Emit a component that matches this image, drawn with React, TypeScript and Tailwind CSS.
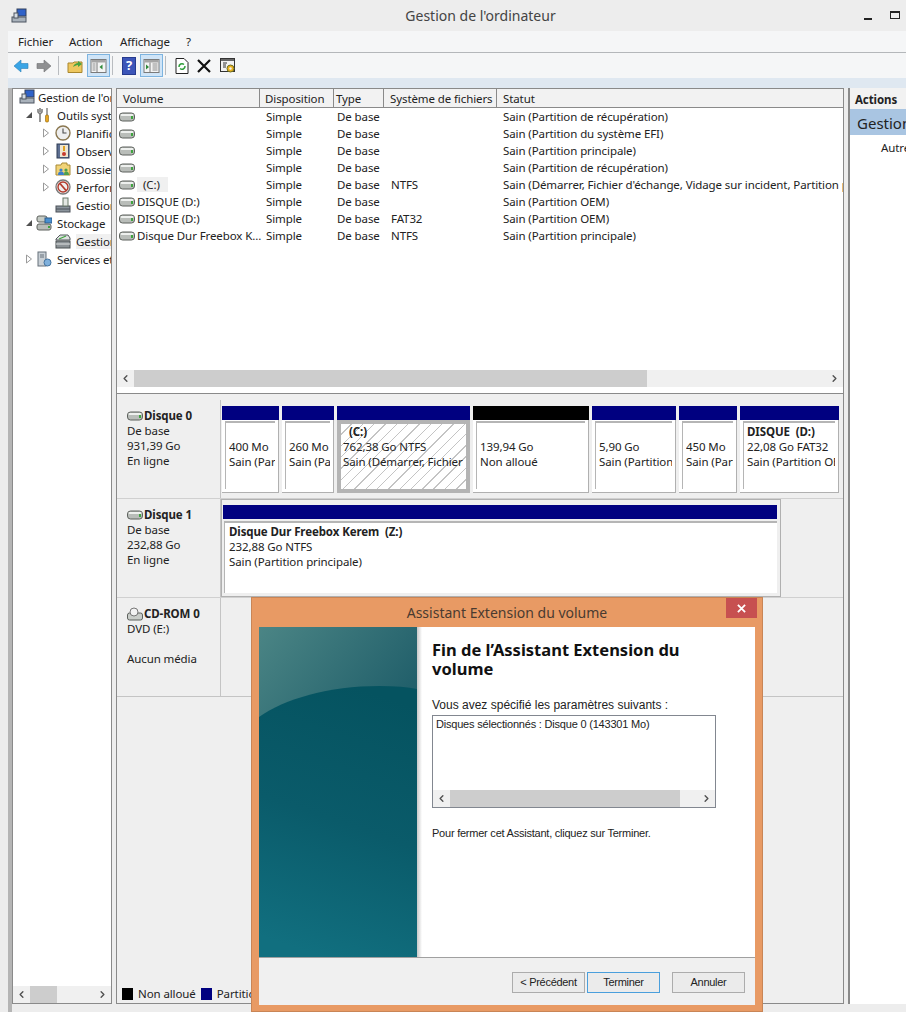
import { ChevronLeft, ChevronRight } from "lucide-react";

const treeRows = [
  { pad: 6, arrow: "", icon: "computer", label: "Gestion de l'ordinateur", bg: "" },
  { pad: 12, arrow: "open", icon: "tools", label: "Outils système", bg: "" },
  { pad: 29, arrow: "closed", icon: "clock", label: "Planificateur", bg: "" },
  { pad: 29, arrow: "closed", icon: "log", label: "Observateur", bg: "" },
  { pad: 29, arrow: "closed", icon: "folder", label: "Dossiers", bg: "" },
  { pad: 29, arrow: "closed", icon: "perf", label: "Performances", bg: "" },
  { pad: 31, arrow: "", icon: "device", label: "Gestionnaire", bg: "" },
  { pad: 12, arrow: "open", icon: "storage", label: "Stockage", bg: "" },
  { pad: 31, arrow: "", icon: "disk", label: "Gestion", bg: "bg-[#f0f0f0]" },
  { pad: 12, arrow: "closed", icon: "services", label: "Services et", bg: "" },
];

const volumes = [
  { name: "", layout: "Simple", type: "De base", fs: "", status: "Sain (Partition de récupération)" },
  { name: "", layout: "Simple", type: "De base", fs: "", status: "Sain (Partition du système EFI)" },
  { name: "", layout: "Simple", type: "De base", fs: "", status: "Sain (Partition principale)" },
  { name: "", layout: "Simple", type: "De base", fs: "", status: "Sain (Partition de récupération)" },
  { name: "(C:)", layout: "Simple", type: "De base", fs: "NTFS", status: "Sain (Démarrer, Fichier d'échange, Vidage sur incident, Partition principale)" },
  { name: "DISQUE (D:)", layout: "Simple", type: "De base", fs: "", status: "Sain (Partition OEM)" },
  { name: "DISQUE (D:)", layout: "Simple", type: "De base", fs: "FAT32", status: "Sain (Partition OEM)" },
  { name: "Disque Dur Freebox K...", layout: "Simple", type: "De base", fs: "NTFS", status: "Sain (Partition principale)" },
];

const partitions = [
  { width: "w-[57px]", bar: "bg-[#000080]", title: "", size: "400 Mo", state: "Sain (Partition de récupération)" },
  { width: "w-[52px]", bar: "bg-[#000080]", title: "", size: "260 Mo", state: "Sain (Partition EFI)" },
  { width: "w-[133px]", bar: "bg-[#000080]", title: "(C:)", size: "762,38 Go NTFS", state: "Sain (Démarrer, Fichier d'échange)", selected: true },
  { width: "w-[116px]", bar: "bg-black", title: "", size: "139,94 Go", state: "Non alloué" },
  { width: "w-[84px]", bar: "bg-[#000080]", title: "", size: "5,90 Go", state: "Sain (Partition principale)" },
  { width: "w-[58px]", bar: "bg-[#000080]", title: "", size: "450 Mo", state: "Sain (Partition)" },
  { width: "w-[99px]", bar: "bg-[#000080]", title: "DISQUE  (D:)", size: "22,08 Go FAT32", state: "Sain (Partition OEM)" },
];

function DriveIcon({ className = "w-[16px] h-[10px] shrink-0" }: { className?: string }) {
  return (
    <svg viewBox="0 0 16 10" className={className}>
      <rect x="0.5" y="1" width="15" height="8" rx="3" fill="#b9bdb9" stroke="#5d615d" />
      <rect x="1.500" y="2" width="13" height="2" rx="1" fill="#eef0ee" />
      <rect x="12" y="4" width="2" height="3" fill="#3fa33f" />
    </svg>
  );
}

function TreeIcon({ kind }: { kind: string }) {
  if (kind === "computer")
    return (
      <svg viewBox="0 0 16 16" className="h-4 w-4 shrink-0">
        <rect x="6" y="1" width="9" height="7" fill="#2f62c9" stroke="#33415c" />
        <rect x="1" y="9" width="14" height="5" fill="#a9b2bb" stroke="#4c5560" />
        <rect x="3" y="5" width="4" height="5" fill="#d6dde4" stroke="#4c5560" />
      </svg>
    );
  if (kind === "tools")
    return (
      <svg viewBox="0 0 16 16" className="h-4 w-4 shrink-0">
        <path d="M4 1v4M2 2v3l2 2 2-2V2M4 7v8" fill="none" stroke="#7d7d7d" strokeWidth="1.6" />
        <path d="M11 1v7" stroke="#8c8c8c" strokeWidth="1.6" />
        <rect x="9.500" y="8" width="3" height="7" rx="1" fill="#e9a71f" stroke="#8a5f0a" strokeWidth="0.6" />
      </svg>
    );
  if (kind === "clock")
    return (
      <svg viewBox="0 0 16 16" className="h-4 w-4 shrink-0">
        <circle cx="8" cy="8" r="7" fill="#eeeeee" stroke="#8a7750" strokeWidth="1.4" />
        <path d="M8 3.500V8h3.500" fill="none" stroke="#4b4b4b" strokeWidth="1.1" />
      </svg>
    );
  if (kind === "log")
    return (
      <svg viewBox="0 0 16 16" className="h-4 w-4 shrink-0">
        <rect x="2" y="1" width="12" height="14" fill="#5d6f92" stroke="#2f3c55" />
        <rect x="5" y="2" width="8" height="12" fill="#efe6cf" />
        <path d="M9 3v5" stroke="#e0a020" strokeWidth="2" />
        <circle cx="9" cy="11" r="2" fill="#c63a2e" />
      </svg>
    );
  if (kind === "folder")
    return (
      <svg viewBox="0 0 16 16" className="h-4 w-4 shrink-0">
        <path d="M1 4h5l1-2h5v2h3v10H1z" fill="#f1d377" stroke="#a98a35" />
        <circle cx="6" cy="9" r="1.6" fill="#3c7ecb" />
        <path d="M3 14c0-3 1-3.500 3-3.500s3 .5 3 3.500z" fill="#3c7ecb" />
        <circle cx="11" cy="9" r="1.6" fill="#4fa04f" />
        <path d="M9 14c0-3 .5-3.500 2-3.500s3 .5 3 3.500z" fill="#4fa04f" />
      </svg>
    );
  if (kind === "perf")
    return (
      <svg viewBox="0 0 16 16" className="h-4 w-4 shrink-0">
        <circle cx="8" cy="8" r="7" fill="#efefef" stroke="#777777" strokeWidth="1.3" />
        <circle cx="8" cy="8" r="5" fill="none" stroke="#b33a2b" strokeWidth="1.4" />
        <path d="M5 4.500l6 7" stroke="#b33a2b" strokeWidth="1.8" />
      </svg>
    );
  if (kind === "device")
    return (
      <svg viewBox="0 0 16 16" className="h-4 w-4 shrink-0">
        <rect x="1" y="9" width="14" height="6" fill="#8b949c" stroke="#4b5158" />
        <path d="M1 12h14" stroke="#4b5158" />
        <rect x="8" y="1" width="5" height="8" fill="#e3e7e3" stroke="#6a7a6a" />
      </svg>
    );
  if (kind === "storage")
    return (
      <svg viewBox="0 0 16 16" className="h-4 w-4 shrink-0">
        <rect x="1" y="1" width="10" height="6" rx="2" fill="#c4cac4" stroke="#5d615d" />
        <rect x="9" y="3" width="7" height="5" fill="#4a90d0" stroke="#2c5c8c" />
        <rect x="1" y="9" width="14" height="6" rx="2" fill="#b9bdb9" stroke="#5d615d" />
        <rect x="12" y="11" width="2" height="2" fill="#3fa33f" />
      </svg>
    );
  if (kind === "disk")
    return (
      <svg viewBox="0 0 16 16" className="h-4 w-4 shrink-0">
        <path d="M1 6l4-4h8l2 3v2H1z" fill="#dfe2e2" stroke="#53595c" />
        <path d="M4 6l7-3" stroke="#3fa33f" strokeWidth="1.2" />
        <rect x="1" y="8" width="14" height="7" fill="#8c9296" stroke="#4b5053" />
        <path d="M1 11h14" stroke="#dfe2e2" />
      </svg>
    );
  return (
    <svg viewBox="0 0 16 16" className="h-4 w-4 shrink-0">
      <rect x="2" y="1" width="8" height="14" fill="#c9d0d6" stroke="#67717a" />
      <path d="M4 4h4M4 6h4" stroke="#67717a" />
      <circle cx="11.500" cy="11.500" r="3.500" fill="#7fb0dc" stroke="#44739f" />
    </svg>
  );
}

function TreeArrow({ kind }: { kind: string }) {
  if (kind === "open")
    return (
      <svg viewBox="0 0 8 8" className="h-2 w-2 shrink-0">
        <path d="M7 1v6H1z" fill="#505050" />
      </svg>
    );
  if (kind === "closed")
    return (
      <svg viewBox="0 0 8 10" className="h-2.5 w-2 shrink-0">
        <path d="M1.500 1l5 4-5 4z" fill="#ffffff" stroke="#9a9a9a" />
      </svg>
    );
  return <span className="w-2 shrink-0" />;
}

function HScroll({ thumb, grow }: { thumb: string; grow: string }) {
  return (
    <div className="flex h-[17px] shrink-0 items-center bg-[#f0f0f0]">
      <div className="flex w-[17px] shrink-0 justify-center">
        <ChevronLeft size={11} strokeWidth={3} className="text-[#505050]" />
      </div>
      <div className={`h-full bg-[#cdcdcd] ${thumb}`} />
      <div className={grow} />
      <div className="flex w-[17px] shrink-0 justify-center">
        <ChevronRight size={11} strokeWidth={3} className="text-[#505050]" />
      </div>
    </div>
  );
}

function ToolButton({ children }: { children: React.ReactNode }) {
  return (
    <div className="flex h-[23px] w-[23px] items-center justify-center border border-[#7db4e0] bg-[#cfe4f7]">
      {children}
    </div>
  );
}

function PaneIcon({ side }: { side: "left" | "right" }) {
  return (
    <svg viewBox="0 0 16 14" className="h-[14px] w-[17px]">
      <rect x="0.5" y="0.5" width="15" height="13" fill="#f4f4f4" stroke="#7a7a7a" />
      <rect x="1" y="1" width="14" height="2.500" fill="#a5a5a5" />
      <path d="M6.500 3.500v10" stroke="#7a7a7a" />
      <path d={side === "left" ? "M2 5h3M2 7h3M2 9h3M2 11h3" : "M9 5h5M9 7h5M9 9h5M9 11h5"} stroke="#8d8d8d" />
      <path d={side === "left" ? "M12 5.500v5l-3-2.500z" : "M2.500 5.500v5l3-2.500z"} fill="#2f8a3a" />
    </svg>
  );
}

function Toolbar() {
  return (
    <div className="flex h-[25px] shrink-0 items-center bg-[#f5f6f7] pl-[5px]">
      <svg viewBox="0 0 16 14" className="h-[14px] w-[16px]">
        <path d="M8 1L1 7l7 6V9.500h7v-5H8z" fill="#3aa5e6" stroke="#2a7fb8" strokeWidth="0.6" />
      </svg>
      <svg viewBox="0 0 16 14" className="ml-[7px] h-[14px] w-[16px]">
        <path d="M8 1l7 6-7 6V9.500H1v-5h7z" fill="#8f9092" stroke="#6f7072" strokeWidth="0.6" />
      </svg>
      <div className="ml-[6px] h-[19px] w-px bg-[#b9bcc0]" />
      <svg viewBox="0 0 16 16" className="ml-[8px] h-4 w-4">
        <path d="M1 5h5l1-1h8v10.500H1z" fill="#eec75f" stroke="#a9872e" />
        <path d="M6 9c1-3 3-4 5-4V3l4 3-4 3V7c-2 0-3 1-5 2z" fill="#49a341" />
      </svg>
      <div className="ml-[4px]">
        <ToolButton>
          <PaneIcon side="left" />
        </ToolButton>
      </div>
      <div className="ml-[2px] h-[19px] w-px bg-[#b9bcc0]" />
      <div className="ml-[9px] flex h-[18px] w-[14px] items-center justify-center border border-[#263a8e] bg-[#3c55b8] text-[13px] font-bold leading-none text-white">
        ?
      </div>
      <div className="ml-[4px]">
        <ToolButton>
          <PaneIcon side="right" />
        </ToolButton>
      </div>
      <div className="ml-[2px] h-[19px] w-px bg-[#b9bcc0]" />
      <svg viewBox="0 0 14 16" className="ml-[9px] h-4 w-[14px]">
        <path d="M1 .500h8l4 4v11H1z" fill="#ffffff" stroke="#222222" />
        <path d="M4 9a3 3 0 0 1 5-2.500M10 8a3 3 0 0 1-5 2.500" fill="none" stroke="#2e9e3a" strokeWidth="1.500" />
      </svg>
      <svg viewBox="0 0 16 16" className="ml-[7px] h-4 w-4">
        <path d="M2 2l12 12M14 2L2 14" stroke="#111111" strokeWidth="2.200" />
      </svg>
      <svg viewBox="0 0 16 16" className="ml-[8px] h-4 w-4">
        <rect x="0.5" y="0.5" width="14" height="13" fill="#f2f2f2" stroke="#333333" />
        <rect x="1" y="1" width="13" height="2" fill="#666666" />
        <path d="M3 5h4M3 7h3M3 9h3" stroke="#333333" />
        <circle cx="10.500" cy="10.500" r="3.500" fill="#e9b21f" stroke="#6e6e1e" />
        <circle cx="10.500" cy="10.500" r="1.200" fill="#f2f2f2" />
      </svg>
    </div>
  );
}

function Partition({ p }: { p: (typeof partitions)[number] }) {
  const lines = (
    <div className="overflow-hidden whitespace-pre">
      <div className={`h-[15px] font-bold ${p.selected ? "pl-[6px]" : ""}`}>{p.title}</div>
      <div>{p.size}</div>
      <div>{p.state}</div>
    </div>
  );
  return (
    <div className={`flex flex-col ${p.width}`}>
      <div className={`h-[14px] ${p.bar}`} />
      {p.selected ? (
        <div className="h-[73px] border-[4px] border-[#b4b4b4] bg-[repeating-linear-gradient(135deg,#ffffff,#ffffff_7px,#c4c4c4_7px,#c4c4c4_8px)] pl-[2px] pr-[2px] text-[#222222]">
          {lines}
        </div>
      ) : (
        <div className="h-[73px] border-r border-b border-[#b0b0b0] bg-white pl-[3px] pr-[3px] pt-px pb-[3px]">
          <div className="h-full border-t-2 border-l border-[#b5b5b5] pl-[3px] pt-[1px] text-[#222222]">{lines}</div>
        </div>
      )}
    </div>
  );
}

function DiskLabel({ title, lines, icon }: { title: string; lines: string[]; icon?: "cd" }) {
  return (
    <div className="w-[104px] shrink-0 border-r border-[#c4c4c4] pl-[10px] pt-[8px] text-[#222222]">
      <div className="flex h-[15px] items-center font-bold">
        {icon === "cd" ? (
          <svg viewBox="0 0 16 14" className="h-[14px] w-[16px] shrink-0">
            <rect x="0.5" y="6" width="15" height="7" rx="2" fill="#c9cdc9" stroke="#5d615d" />
            <circle cx="7" cy="5" r="4" fill="#f2f2f2" stroke="#777777" />
          </svg>
        ) : (
          <DriveIcon />
        )}
        <span className="ml-px">{title}</span>
      </div>
      {lines.map((line, i) => (
        <div key={i} className="h-[15px]">
          {line}
        </div>
      ))}
    </div>
  );
}

function DialogButton({ label, focus = false }: { label: string; focus?: boolean }) {
  return (
    <div
      className={`flex h-[21px] w-[73px] items-center justify-center border bg-[#ebebeb] text-[11px] tracking-[-0.3px] text-[#222222] ${
        focus ? "border-[#4a9fdc]" : "border-[#acacac]"
      }`}
    >
      {label}
    </div>
  );
}

function Wizard() {
  return (
    <div className="absolute left-[251px] top-[597px] flex h-[415px] w-[512px] flex-col border border-[#c98556] bg-[#e89a64] px-[7px] pb-[6px]">
      <div className="relative flex h-[29px] shrink-0 items-center justify-center text-[14px] tracking-normal text-[#4a3a30]">
        Assistant Extension du volume
        <div className="absolute -right-[2px] top-0 flex h-[20px] w-[31px] items-center justify-center bg-[#c75050]">
          <svg viewBox="0 0 10 10" className="h-[9px] w-[9px]">
            <path d="M1 1l8 8M9 1L1 9" stroke="#ffffff" strokeWidth="2" />
          </svg>
        </div>
      </div>
      <div className="flex min-h-0 flex-1 flex-col bg-white">
        <div className="flex h-[331px] shrink-0 border-b border-[#a0a0a0]">
          <svg viewBox="0 0 158 330" preserveAspectRatio="none" className="h-full w-[158px] shrink-0">
            <defs>
              <linearGradient id="top" x1="0" y1="0" x2="1" y2="0.5">
                <stop offset="0" stopColor="#4b8585" />
                <stop offset="1" stopColor="#22606b" />
              </linearGradient>
              <linearGradient id="low" x1="0.6" y1="0" x2="0.4" y2="1">
                <stop offset="0" stopColor="#055360" />
                <stop offset="0.5" stopColor="#0a5b6a" />
                <stop offset="1" stopColor="#116f7f" />
              </linearGradient>
            </defs>
            <rect width="158" height="100" fill="url(#top)" />
            <path d="M0 90C25 72 70 59 120 59Q145 59 158 62V330H0z" fill="url(#low)" />
          </svg>
          <div className="w-[5px] shrink-0 bg-gradient-to-r from-[#c8c8c8] to-white" />
          <div className="flex-1 pl-[10px] pt-[13px] [font-family:'Liberation_Sans',sans-serif]">
            <div className="w-[300px] text-[16.500px] font-bold leading-[19px] tracking-normal text-[#111111] [font-family:'Noto_Sans',sans-serif]">
              Fin de l’Assistant Extension du volume
            </div>
            <div className="mt-[20px] text-[12px] leading-[14px] tracking-normal text-[#222222]">
              Vous avez spécifié les paramètres suivants :
            </div>
            <div className="mt-[3px] flex h-[93px] w-[284px] flex-col border border-[#828790] text-[11px] tracking-[-0.2px] text-[#222222]">
              <div className="flex-1 pl-[3px] pt-px">Disques sélectionnés : Disque 0 (143301 Mo)</div>
              <HScroll thumb="w-[230px]" grow="flex-1" />
            </div>
            <div className="mt-[18px] text-[11px] tracking-[-0.23px] text-[#222222]">
              Pour fermer cet Assistant, cliquez sur Terminer.
            </div>
          </div>
        </div>
        <div className="flex flex-1 items-start bg-[#f0f0f0] pl-[253px] pt-[14px] [font-family:'Liberation_Sans',sans-serif]">
          <DialogButton label="< Précédent" />
          <div className="ml-[2px]">
            <DialogButton label="Terminer" focus />
          </div>
          <div className="ml-[12px]">
            <DialogButton label="Annuler" />
          </div>
        </div>
      </div>
    </div>
  );
}

export default function App() {
  return (
    <div className="relative flex h-[1012px] w-[906px] flex-col overflow-hidden bg-[#ededed] text-[11.500px] leading-[15px] tracking-[-0.1px] text-[#222222] [font-family:'Noto_Sans',sans-serif]">
      {/* fenetre */}
      <div className="flex h-[31px] shrink-0 items-center pl-[11px]">
        <svg viewBox="0 0 16 16" className="h-4 w-4 shrink-0">
          <rect x="6" y="1" width="9" height="7" fill="#2f62c9" stroke="#33415c" />
          <rect x="1" y="9" width="14" height="5" fill="#a9b2bb" stroke="#4c5560" />
          <rect x="3" y="5" width="4" height="5" fill="#d6dde4" stroke="#4c5560" />
        </svg>
        <div className="flex-1 pl-[70px] text-center text-[14px] tracking-normal text-[#444444]">Gestion de l'ordinateur</div>
        <div className="mb-[2px] flex items-center gap-[18px]">
          <div className="mt-[8px] h-[2px] w-[8px] bg-[#222222]" />
          <div className="mr-[6px] h-[8px] w-[10px] border border-t-2 border-[#222222]" />
        </div>
      </div>
      <div className="ml-[8px] flex min-h-0 flex-1 flex-col">
        <div className="flex h-[22px] shrink-0 items-center border-b border-[#b4b7ba] bg-[#f5f6f7] pl-[10px]">
          <span className="w-[51px]">Fichier</span>
          <span className="w-[51px]">Action</span>
          <span className="w-[66px]">Affichage</span>
          <span>?</span>
        </div>
        <Toolbar />
        <div className="h-[10px] shrink-0 bg-[#dfe8f1]" />
        <div className="flex min-h-0 flex-1 border-l-4 border-[#b5b5b5] pb-[8px]">
          {/* arbre */}
          <div className="flex w-[100px] shrink-0 flex-col border border-[#8a8a8a] bg-white">
            <div className="flex-1 overflow-hidden">
              <div className="-mt-px">
                {treeRows.map((row) => (
                  <div key={row.icon} className="flex h-[18px] items-center whitespace-nowrap" style={{ paddingLeft: row.pad }}>
                    {row.arrow && <TreeArrow kind={row.arrow} />}
                    <div className={`flex items-center ${row.arrow ? (row.pad > 12 ? "ml-[5px]" : "ml-[3px]") : row.pad > 12 ? "ml-[11px]" : ""}`}>
                      <TreeIcon kind={row.icon} />
                    </div>
                    <span className={`${row.pad > 6 ? "ml-[5px]" : "ml-[3px]"} ${row.bg}`}>{row.label}</span>
                  </div>
                ))}
              </div>
            </div>
            <HScroll thumb="w-[27px]" grow="flex-1" />
          </div>
          <div className="w-[4px] shrink-0" />
          {/* centre */}
          <div className="flex w-[728px] shrink-0 flex-col border border-[#8a8a8a] bg-[#efefef]">
            <div className="flex h-[298px] shrink-0 flex-col bg-white">
              <div className="flex h-[19px] shrink-0 items-center whitespace-nowrap border-b border-[#8a8a8a] bg-[#f2f2f2]">
                <div className="flex h-full w-[143px] items-center border-r border-[#8a8a8a] pl-[6px]">Volume</div>
                <div className="flex h-full w-[74px] items-center border-r border-[#8a8a8a] pl-[5px]">Disposition</div>
                <div className="flex h-full w-[50px] items-center border-r border-[#8a8a8a] pl-[2px]">Type</div>
                <div className="flex h-full w-[113px] items-center border-r border-[#8a8a8a] pl-[6px]">Système de fichiers</div>
                <div className="flex-1 pl-[6px]">Statut</div>
              </div>
              <div className="flex-1 overflow-hidden">
                {volumes.map((v, i) => (
                  <div key={i} className="flex h-[17px] items-center whitespace-nowrap">
                    <div className="flex w-[143px] shrink-0 items-center pl-[2px]">
                      <DriveIcon />
                      {v.name && (
                        <span className={v.name === "(C:)" ? "ml-[2px] bg-[#f0f0f0] pl-[6px] pr-[8px]" : "ml-[2px]"}>{v.name}</span>
                      )}
                    </div>
                    <div className="w-[74px] shrink-0 pl-[6px]">{v.layout}</div>
                    <div className="w-[50px] shrink-0 pl-[3px]">{v.type}</div>
                    <div className="w-[113px] shrink-0 pl-[7px]">{v.fs}</div>
                    <div className="w-[346px] shrink-0 overflow-hidden pl-[6px]">{v.status}</div>
                  </div>
                ))}
              </div>
              <HScroll thumb="w-[513px]" grow="flex-1" />
            </div>
            <div className="h-[7px] shrink-0 border-b border-[#8a8a8a] bg-white" />
            <div className="flex min-h-0 flex-1 flex-col">
              <div className="mt-[6px] flex h-[99px] shrink-0 border-b border-[#d0d0d0]">
                <DiskLabel title="Disque 0" lines={["De base", "931,39 Go", "En ligne"]} />
                <div className="flex gap-[3px] pl-[1px] pt-[6px]">
                  {partitions.map((p) => (
                    <Partition key={p.size} p={p} />
                  ))}
                </div>
              </div>
              <div className="flex h-[99px] shrink-0 border-b border-[#d0d0d0]">
                <DiskLabel title="Disque 1" lines={["De base", "232,88 Go", "En ligne"]} />
                <div className="h-[98px] w-[560px] border border-[#b0b0b0] pl-px pr-[3px] pt-[5px]">
                  <div className="h-[14px] bg-[#000080]" />
                  <div className="ml-px mt-[2px] h-[72px] border-t-2 border-l border-[#b5b5b5] bg-white pl-[4px] text-[#222222]">
                    <div className="whitespace-pre pt-px font-bold">Disque Dur Freebox Kerem  (Z:)</div>
                    <div>232,88 Go NTFS</div>
                    <div>Sain (Partition principale)</div>
                  </div>
                </div>
              </div>
              <div className="flex h-[99px] shrink-0 border-b border-[#c4c4c4]">
                <DiskLabel title="CD-ROM 0" lines={["DVD (E:)", "", "Aucun média"]} icon="cd" />
              </div>
              <div className="flex-1" />
              <div className="flex h-[19px] shrink-0 items-center pl-[5px]">
                <div className="h-[12px] w-[11px] bg-black" />
                <span className="ml-[5px]">Non alloué</span>
                <div className="ml-[5px] h-[12px] w-[11px] bg-[#000080]" />
                <span className="ml-[5px]">Partition principale</span>
              </div>
            </div>
          </div>
          <div className="w-[4px] shrink-0" />
          {/* actions */}
          <div className="flex min-w-0 flex-1 flex-col overflow-hidden whitespace-nowrap border-l-2 border-[#8a8a8a] bg-white">
            <div className="flex h-[21px] shrink-0 items-center bg-[#f2f2f2] pl-[5px] pt-px font-bold">Actions</div>
            <div className="flex h-[26px] shrink-0 items-center bg-[#a9c5e2] pl-[7px] pt-[3px] text-[15px] tracking-normal text-[#222222]">Gestion</div>
            <div className="pl-[31px] pt-[5px]">Autres</div>
          </div>
        </div>
      </div>
      <Wizard />
    </div>
  );
}
